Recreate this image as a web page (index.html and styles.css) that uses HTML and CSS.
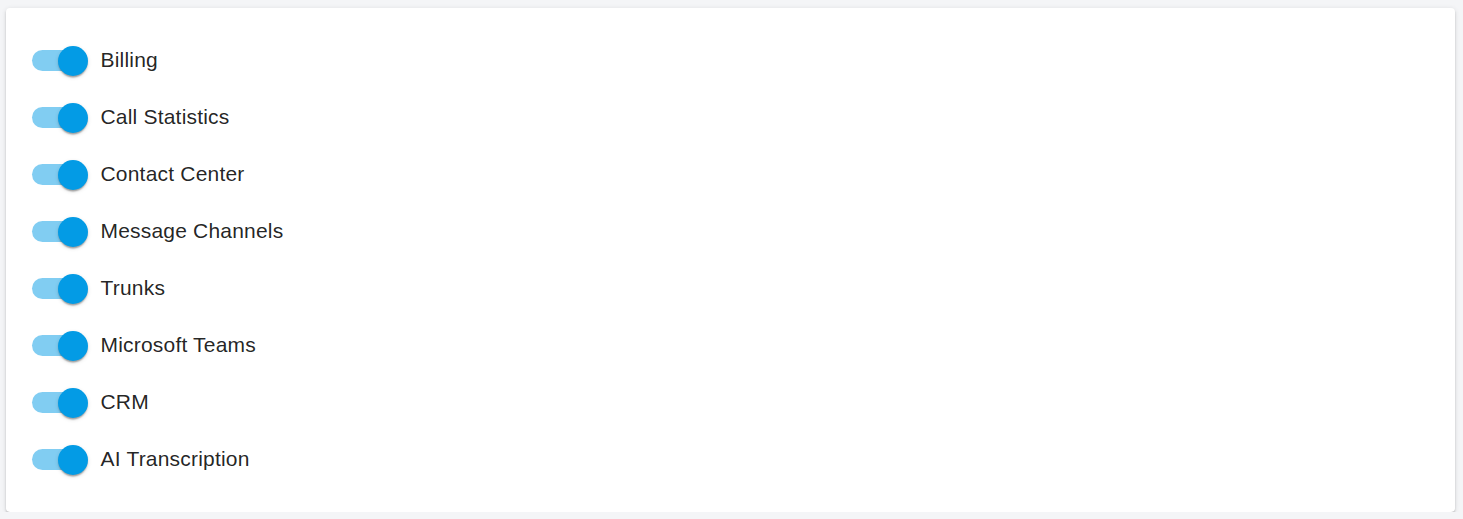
FILE: index.html
```html
<!DOCTYPE html>
<html lang="en">
<head>
<meta charset="utf-8">
<title>Features</title>
<link rel="stylesheet" href="styles.css">
</head>
<body>
<div class="card">
  <div class="row"><span class="switch"><span class="track"></span><span class="thumb"></span></span><span class="label">Billing</span></div>
  <div class="row"><span class="switch"><span class="track"></span><span class="thumb"></span></span><span class="label">Call Statistics</span></div>
  <div class="row"><span class="switch"><span class="track"></span><span class="thumb"></span></span><span class="label">Contact Center</span></div>
  <div class="row"><span class="switch"><span class="track"></span><span class="thumb"></span></span><span class="label">Message Channels</span></div>
  <div class="row"><span class="switch"><span class="track"></span><span class="thumb"></span></span><span class="label">Trunks</span></div>
  <div class="row"><span class="switch"><span class="track"></span><span class="thumb"></span></span><span class="label">Microsoft Teams</span></div>
  <div class="row"><span class="switch"><span class="track"></span><span class="thumb"></span></span><span class="label">CRM</span></div>
  <div class="row"><span class="switch"><span class="track"></span><span class="thumb"></span></span><span class="label">AI Transcription</span></div>
</div>
</body>
</html>
```
FILE: styles.css
```css
html, body {
  margin: 0;
  padding: 0;
}
body {
  background: #f4f5f7;
  font-family: "Liberation Sans", Arial, sans-serif;
  padding: 8px 8px 0 6px;
}
.card {
  background: #fff;
  border-radius: 4px;
  box-shadow: 0 3px 1px -2px rgba(0,0,0,0.25), 0 2px 2px 0 rgba(0,0,0,0.16), 0 1px 5px 0 rgba(0,0,0,0.12);
  padding: 24px 8px 24px 8px;
  display: flex;
  flex-direction: column;
}
.row {
  display: flex;
  align-items: center;
  height: 57px;
}
.switch {
  position: relative;
  width: 87px;
  height: 57px;
  flex: none;
}
.track {
  position: absolute;
  left: 18px;
  top: 18px;
  width: 51px;
  height: 21px;
  border-radius: 10.5px;
  background: #81cdf2;
}
.thumb {
  position: absolute;
  left: 43.5px;
  top: 13.5px;
  width: 30px;
  height: 30px;
  border-radius: 50%;
  background: #039be5;
  box-shadow: 0 3px 1.5px -1.5px rgba(0,0,0,0.2), 0 1.5px 1.5px 0 rgba(0,0,0,0.14), 0 1.5px 4.5px 0 rgba(0,0,0,0.12);
}
.label {
  font-size: 21px;
  letter-spacing: 0.00938em;
  color: rgba(0,0,0,0.87);
  line-height: 1.5;
  padding-bottom: 2px;
  margin-left: -0.5px;
}
```
